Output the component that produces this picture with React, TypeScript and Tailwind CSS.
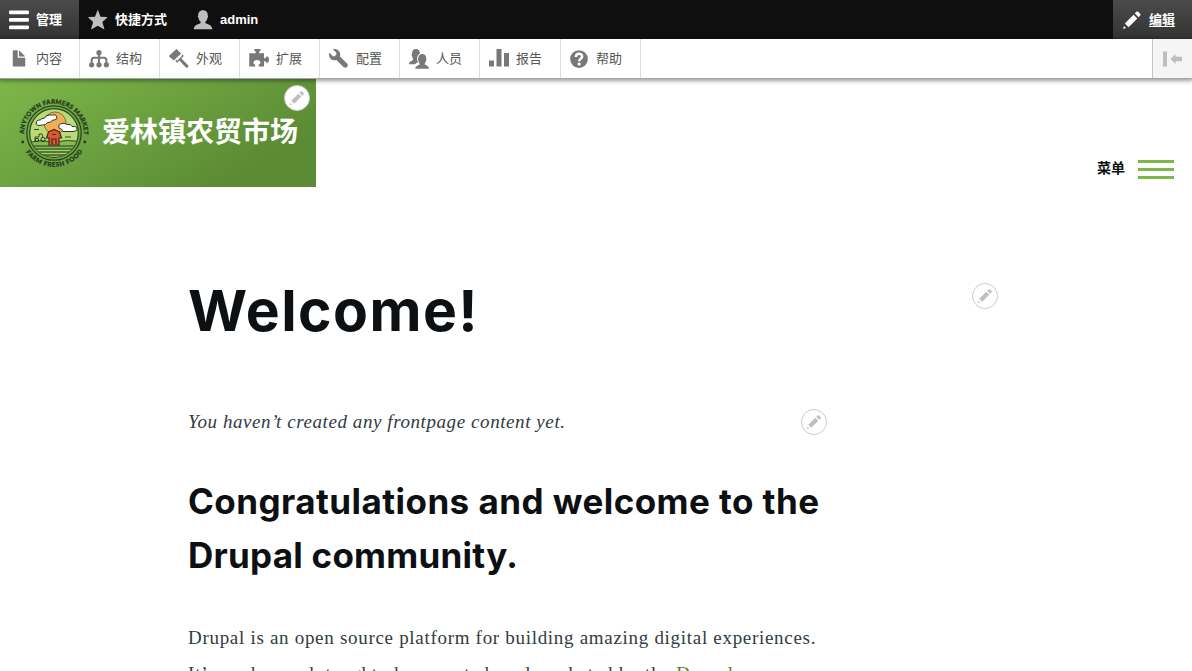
import type { ReactNode } from "react";

const cjk = "font-['Liberation_Sans','Noto_Sans_CJK_SC',sans-serif]";

function Icon({ children, className = "text-[#787878]" }: { children: ReactNode; className?: string }) {
  return (
    <svg viewBox="0 0 16 16" className={`size-5 shrink-0 fill-current ${className}`}>
      {children}
    </svg>
  );
}

const pencil = (
  <>
    <path d="M14.545 3.042l-1.586-1.585c-.389-.389-1.025-.389-1.414 0l-1.293 1.293 3 3 1.293-1.293c.389-.389.389-1.026 0-1.415z" />
    <rect x="5.129" y="3.8" transform="matrix(-.707 -.707 .707 -.707 6.189 20.064)" width="4.243" height="9.899" />
    <path d="M.908 14.775c-.087.262.055.397.316.312l2.001-.667-1.65-1.646-.667 2.001z" />
  </>
);

const personPath =
  "M10.2 10.6c-.4-.3-.4-.9-.3-1.300 1-.9 1.500-1.800 1.700-3.200.6-.3.7-1.400.2-1.800C12 1.800 10.500.1 8 .1S4 1.800 4.200 4.300c-.5.400-.4 1.500.2 1.800.2 1.400.7 2.300 1.700 3.200.1.400.1 1-.3 1.300C4.200 11.500.6 11.900.6 15.400h14.800c0-3.500-3.600-3.900-5.200-4.800z";

const menuItems: { label: string; width: string; icon: ReactNode }[] = [
  {
    label: "内容",
    width: "w-20 pl-[9px]",
    icon: (
      <>
        <path d="M12.502 7h-5c-.276 0-.502-.225-.502-.5v-5c0-.275-.225-.5-.5-.5h-3c-.275 0-.5.225-.5.5v12.029c0 .275.225.5.5.5h9c.275 0 .5-.225.5-.5V7.500c0-.275-.225-.5-.498-.5z" />
        <path d="M8.502 6h4c.275 0 .34-.159.146-.354L8.355 1.354C8.160 1.159 8.002 1.225 8.002 1.500v4c0 .275.225.5.5.5z" />
      </>
    ),
  },
  {
    label: "结构",
    width: "w-20 pl-[9px]",
    icon: (
      <>
        <circle cx="8" cy="2.900" r="2.100" />
        <circle cx="2.100" cy="12.600" r="2.100" />
        <circle cx="8" cy="12.600" r="2.100" />
        <circle cx="13.900" cy="12.600" r="2.100" />
        <path d="M2.100 12V9Q2.100 7 4 7h8q1.900 0 1.900 2v3M8 4v8" fill="none" stroke="currentColor" strokeWidth="1.600" />
      </>
    ),
  },
  {
    label: "外观",
    width: "w-20 pl-[9px]",
    icon: (
      <>
        <path d="M5.500.3c.3-.3.600-.3.900 0l3.300 3.200-5.900 5.700L.3 6.100c-.4-.3-.4-.6 0-.9z" />
        <path d="M10.700 4.300l.800.700c.3.300.3.600 0 .9L9.900 7.500l5.400 5.500c.9.900-.8 2.600-1.700 1.700L8.200 9.200 6.900 10.500c-.3.300-.6.300-.9 0l-1-.9z" />
        <path d="M5.900 8.700l4-3.900.6.600-4 3.900z" fill="#fff" />
      </>
    ),
  },
  {
    label: "扩展",
    width: "w-20 pl-[9px]",
    icon: (
      <path d="M.2 3.400h5.200V2L4.300 1.500V0h4.900v1.500l-1.100.5v1.400H12v3.900h1.200c.3-.9.700-1.300 1.400-1.300 1.800 0 1.800 5 0 5-.7 0-1.100-.4-1.400-1.300H12V13.900H7.700v-1.400c1-.4 1.400-.9 1.400-1.700 0-2.600-5.600-2.600-5.600 0 0 .8.5 1.300 1.400 1.700v1.400H.2z" />
    ),
  },
  {
    label: "配置",
    width: "w-20 pl-[9px]",
    icon: (
      <path d="M14.416 11.586L8.750 5.921c.15-.449.252-.921.252-1.421C9.002 2.015 6.986 0 4.500 0c-.505 0-.981.102-1.434.255l2.431 2.431c.588.588.588 1.541 0 2.129l-.683.683c-.588.588-1.541.588-2.129 0L.255 3.067C.102 3.519 0 3.995 0 4.500c0 2.485 2.015 4.501 4.500 4.501.5 0 .972-.102 1.421-.251l5.665 5.664c2 1.700 4.700-1 2.830-2.828z" />
    ),
  },
  {
    label: "人员",
    width: "w-20 pl-[9px]",
    icon: (
      <>
        <path d="M0 12.200c0-2.600 2.800-2.400 3.300-3.800C2.900 7.800 2.700 6.800 2.600 5.800c-.6-.4-.7-1.300-.3-1.700C2.300 1.400 3.500 0 5.500 0c2.200 0 3.300 1.400 3.200 3.700-1.700.9-2.400 2.600-2 4.600l.4 2.500c-1 .4-1.900.7-2.300 1.400z" />
        <path d="M5 15.800c0-2.900 3.100-2.500 3.700-3.900C7.900 11.200 7.700 10.200 7.600 9.400c-.5-.3-.6-1.200-.2-1.600 0-2.500 1.200-3.800 3.200-3.800s3.300 1.300 3.200 3.800c.4.400.3 1.300-.2 1.600-.1.800-.4 1.800-1.200 2.500.6 1.400 3.600 1 3.600 3.900z" stroke="#fff" strokeWidth="1" paintOrder="stroke" />
      </>
    ),
  },
  {
    label: "报告",
    width: "w-[81px] pl-[9px]",
    icon: <path d="M0 9.200h4V14H0zM6 0h4v14H6zM12 3.200h4V14h-4z" />,
  },
  {
    label: "帮助",
    width: "w-20 pl-2",
    icon: (
      <>
        <circle cx="8" cy="8" r="7.100" />
        <path d="M5.500 6.400C5.600 2.900 10.600 3.100 10.500 6c0 1.800-2.400 1.800-2.400 3.700" fill="none" stroke="#fff" strokeWidth="2" />
        <circle cx="8.100" cy="12" r="1.250" fill="#fff" />
      </>
    ),
  },
];

function EditButton({ className = "" }: { className?: string }) {
  return (
    <button
      aria-label="编辑"
      className={`flex size-[26px] shrink-0 items-center justify-center rounded-full border border-[#ccc] bg-white ${className}`}
    >
      <svg viewBox="0 0 16 16" className="size-4 fill-[#bebebe]">{pencil}</svg>
    </button>
  );
}

function Logo() {
  return (
    <svg viewBox="0 0 70 70" className="size-[70px] shrink-0">
      <defs>
        <path id="logo-top" d="M5.300 38a29.800 29.800 0 1 1 59.400 0" />
        <path id="logo-bottom" d="M1.100 35a33.900 33.900 0 0 0 67.800 0" />
        <clipPath id="logo-disc">
          <circle cx="35" cy="35" r="24" />
        </clipPath>
      </defs>
      <g className="fill-[#263b20] stroke-[#263b20] stroke-[0.3px] font-['Lato',sans-serif] text-[6.2px] font-black">
        <text><textPath href="#logo-top" startOffset="2" textLength="95" lengthAdjust="spacing">ANYTOWN FARMERS MARKET</textPath></text>
        <text><textPath href="#logo-bottom" startOffset="20" textLength="67" lengthAdjust="spacing">FARM FRESH FOOD</textPath></text>
      </g>
      <circle cx="3.700" cy="44" r="1.400" fill="#263b20" />
      <circle cx="65.800" cy="44" r="1.400" fill="#263b20" />
      <circle cx="35" cy="35" r="27.200" fill="none" stroke="#294725" strokeWidth="1.300" />
      <circle cx="35" cy="35" r="24.300" fill="#bada77" stroke="#294725" strokeWidth="1.200" />
      <g clipPath="url(#logo-disc)">
        <circle cx="36" cy="25" r="11" fill="#f2ad56" stroke="#4d5728" strokeWidth=".7" />
        <path d="M8 46q12-6 27-1 15-5 28 0v17H8z" fill="#84ba50" stroke="#294725" />
        <path d="M10 48h50M10 51h50M10 54h50M10 57h50" stroke="#263b20" strokeWidth="1.200" />
        <path d="M14 52.500h42M18 55.500h34" stroke="#b8d475" strokeWidth=".7" />
      </g>
      <path d="M19 27.500q-3-1-1.500-4 1-2 4-1.500.5-2 4-1.800 1-3.200 5-3.200h3q3-1 4 1 2 3-2 4h-2q-1 3-5 2.500-1.500 3-5 2.500zM40 30q-1-4 3-4.500 3-1 5 1 4-1 5 2 5-.5 5 2.500 0 2.500-4 2.500H44q-1-3-4-3.500z" fill="#fff" stroke="#263b20" />
      <path d="M27.500 40l2-6 5.500-2.500 5.500 2.500 2 6H40v7H30v-7z" fill="#db5831" stroke="#4b2820" strokeWidth="1.200" />
      <path d="M33 46v-5h4v5M33 36.500h4" fill="none" stroke="#4b2820" strokeWidth="1.200" />
      <path d="M16 43v-4h4v-3h3l1 4M15 31.500h5M46 39h6" fill="none" stroke="#304d25" />
      <circle cx="18" cy="42" r="1.700" fill="none" stroke="#263b20" />
      <circle cx="24" cy="41.500" r="2.100" fill="none" stroke="#263b20" />
    </svg>
  );
}

export default function App() {
  return (
    <div className={`flex h-[671px] w-full flex-col overflow-hidden bg-white ${cjk}`}>
      <nav className="flex h-[39px] shrink-0 bg-[#0f0f0f] text-[13px] font-bold text-white">
        <div className="flex w-[79px] items-center gap-[7px] bg-linear-to-b from-[#4b4b4b] to-[#333] pl-[9px]">
          <Icon className="text-white">
            <rect y="0.400" width="16" height="3" rx="1" />
            <rect y="6.400" width="16" height="3" rx="1" />
            <rect y="12.400" width="16" height="3" rx="1" />
          </Icon>
          <span>管理</span>
        </div>
        <div className="flex w-[105px] items-center gap-[7px] pl-[9px]">
          <Icon className="text-[#bebebe]">
            <path d="M7.500.3q.3-.6.600 0l1.900 5.100 5 .2q.6.100.2.500l-3.700 3.500 1.600 5.500q.1.600-.4.300L7.800 12.600l-4.900 2.800q-.5.300-.4-.3l1.600-5.500L.4 6.100q-.4-.4.200-.5l5-.2z" />
          </Icon>
          <span>快捷方式</span>
        </div>
        <div className="flex items-center gap-[7px] pl-[9px]">
          <Icon className="text-[#bebebe]"><path d={personPath} /></Icon>
          <span>admin</span>
        </div>
        <div className="ml-auto flex w-[79px] items-center gap-[7px] bg-linear-to-b from-[#4b4b4b] to-[#333] pl-[9px]">
          <Icon className="text-white">{pencil}</Icon>
          <span className="underline underline-offset-2">编辑</span>
        </div>
      </nav>

      <nav className="relative z-10 flex h-10 shrink-0 border-b border-[#a5a5a5] bg-white text-[13px] text-[#565656] shadow-[0_1px_4px_1px_rgba(0,0,0,0.38)]">
        {menuItems.map((item) => (
          <div key={item.label} className={`flex items-center gap-[7px] border-r border-[#ddd] ${item.width}`}>
            <Icon>{item.icon}</Icon>
            <span>{item.label}</span>
          </div>
        ))}
        <div className="ml-auto flex w-10 items-center border-l border-[#c5c5c5] bg-[#f5f5f5] pl-[9px]">
          <Icon className="text-[#bebebe]">
            <path d="M.8 2H4v12H.8zM6.800 8l4-4v2.200H16v3.600h-5.200V12z" />
          </Icon>
        </div>
      </nav>

      <header className="flex h-[108px] shrink-0 justify-between">
        <div className="relative flex w-[316px] items-center bg-linear-[150deg,#7db84a_0%,#5b8b34_80%] pl-[19px]">
          <Logo />
          <div className="ml-[13px] whitespace-nowrap text-[28px] leading-none font-bold text-white">爱林镇农贸市场</div>
          <EditButton className="absolute top-1.5 right-1.5" />
        </div>
        <div className="mt-[72px] mr-[18px] flex h-9 items-center gap-[13px]">
          <span className="-mt-0.5 text-sm font-bold text-[#0d1012]">菜单</span>
          <div className="flex w-9 flex-col gap-[5px]">
            <div className="h-[3px] bg-[#7cb74a]" />
            <div className="h-[3px] bg-[#7cb74a]" />
            <div className="h-[3px] bg-[#7cb74a]" />
          </div>
        </div>
      </header>

      <main className="ml-[188px] w-[810px] pt-[96px]">
        <div className="flex h-[60px] items-start justify-between">
          <h1 className="-mt-[2px] whitespace-nowrap font-['Inter',sans-serif] text-[57px] leading-[60px] font-bold tracking-[1.45px] text-[#0d1012]">Welcome!</h1>
          <EditButton />
        </div>
        <div className="mt-[66px] flex h-[26px] w-[639px] items-center justify-between">
          <p className="whitespace-nowrap font-['Liberation_Serif',serif] text-[19px] italic tracking-[0.58px] text-[#313b42]">You haven’t created any frontpage content yet.</p>
          <EditButton />
        </div>
        <h2 className="mt-[39px] whitespace-nowrap font-['Inter',sans-serif] text-[35px] leading-[54px] font-bold tracking-[0.45px] text-[#0d1012]">
          Congratulations and welcome to the<br />
          <span className="tracking-[0.25px]">Drupal community.</span>
        </h2>
        <p className="mt-[38px] whitespace-nowrap font-['Liberation_Serif',serif] text-[19px] leading-9 tracking-[0.7px] text-[#313b42]">
          Drupal is an open source platform for building amazing digital experiences.<br />
          <span className="tracking-[0.8px]">It’s made, used, taught, documented, and marketed by the <a className="text-[#53802e]">Drupal</a></span>
        </p>
      </main>
    </div>
  );
}
